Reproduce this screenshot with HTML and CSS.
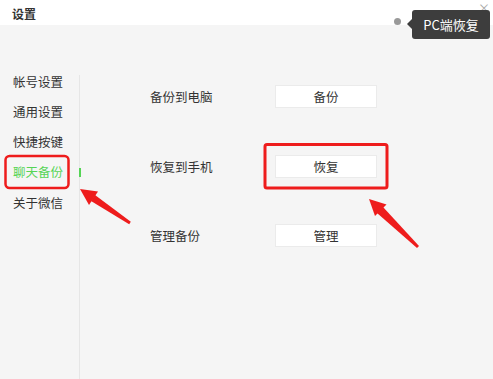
FILE: index.html
```html
<!DOCTYPE html>
<html lang="zh-CN">

<head>
    <meta charset="UTF-8">
    <meta name="viewport" content="width=device-width, initial-scale=1.0">
    <title>设置</title>
    <link rel="stylesheet" href="styles.css">
</head>

<body>
    <div id="window">
        <div class="title-bar">
            <span class="title">设置</span>
            <span class="close">×</span>
            <span class="dot"></span>
            <div class="tip">PC端恢复</div>
        </div>
        <div class="main">
            <div class="side">
                <div class="side-item">帐号设置</div>
                <div class="side-item">通用设置</div>
                <div class="side-item">快捷按键</div>
                <div class="side-item active">聊天备份</div>
                <div class="side-item">关于微信</div>
            </div>
            <div class="divider"></div>
            <div class="content">
                <div class="row">
                    <span class="label">备份到电脑</span>
                    <div class="btn">备份</div>
                </div>
                <div class="row">
                    <span class="label">恢复到手机</span>
                    <div class="btn">恢复</div>
                </div>
                <div class="row">
                    <span class="label">管理备份</span>
                    <div class="btn">管理</div>
                </div>
            </div>
        </div>

        <!-- annotations drawn on top of the screenshot -->
        <svg class="marks" width="493" height="379" viewBox="0 0 493 379">
            <rect x="5.5" y="156" width="63" height="32" rx="4" fill="none" stroke="#ee1c1c" stroke-width="2.5" />
            <rect x="265" y="144.5" width="122" height="43.5" rx="2" fill="none" stroke="#ee1c1c" stroke-width="3" />
            <polygon points="130.8,221.8 129.2,224.2 91,201 95,195" fill="#ee1c1c" />
            <polygon points="80,189 98,191.5 89,205" fill="#ee1c1c" />
            <polygon points="419,246 417,248 377,213 383,207" fill="#ee1c1c" />
            <polygon points="369,199 386.5,204.5 375,216" fill="#ee1c1c" />
        </svg>
    </div>
</body>

</html>
```
FILE: styles.css
```css
* {
    padding: 0;
    margin: 0;
    box-sizing: border-box;
}

body {
    font-family: "Noto Sans CJK SC", "Noto Sans", sans-serif;
    color: #333;
    background: #f5f5f5;
}

#window {
    width: 493px;
    height: 379px;
    position: relative;
    overflow: hidden;
    display: flex;
    flex-direction: column;
}

.title-bar {
    height: 25px;
    background: #fff;
    padding-left: 12px;
    position: relative;
}

.title {
    font-size: 12px;
    font-weight: bold;
    line-height: 24px;
    color: #333;
}

.close {
    position: absolute;
    right: 3px;
    top: 2px;
    font-size: 12px;
    line-height: 12px;
    color: #aaa;
}

.dot {
    position: absolute;
    left: 394px;
    top: 18px;
    width: 7px;
    height: 7px;
    border-radius: 50%;
    background: #999;
}

.tip {
    position: absolute;
    left: 412px;
    top: 10px;
    width: 78px;
    height: 29px;
    background: #3d3d3d;
    border-radius: 3px;
    color: #fff;
    font-size: 13px;
    line-height: 29px;
    text-align: center;
    z-index: 2;
}

.tip::before {
    content: "";
    position: absolute;
    left: -5px;
    top: 9px;
    border-top: 5px solid transparent;
    border-bottom: 5px solid transparent;
    border-right: 5px solid #3d3d3d;
}

.main {
    flex: 1;
    display: flex;
    background: #f5f5f5;
}

.side {
    width: 79px;
    padding-top: 42px;
    padding-left: 13px;
}

.side-item {
    height: 30px;
    line-height: 30px;
    font-size: 12.5px;
    color: #333;
    position: relative;
}

.side-item:nth-child(5) {
    margin-top: 1px;
}

.side-item.active {
    color: #55d455;
}

.side-item.active::after {
    content: "";
    position: absolute;
    right: -2px;
    top: 11px;
    width: 2px;
    height: 9px;
    background: #55d455;
}

.divider {
    width: 1px;
    margin-top: 50px;
    background: #e6e6e6;
}

.content {
    flex: 1;
    padding-left: 70px;
    padding-top: 60px;
    display: flex;
    flex-direction: column;
    gap: 46.5px;
}

.row {
    display: flex;
    align-items: center;
    height: 23px;
}

.label {
    width: 125px;
    font-size: 12.5px;
    color: #333;
}

.btn {
    width: 102px;
    height: 23px;
    background: #fff;
    border: 1px solid #ebebeb;
    font-size: 12.5px;
    line-height: 21px;
    text-align: center;
    color: #333;
}

.marks {
    position: absolute;
    left: 0;
    top: 0;
    z-index: 3;
}
```
